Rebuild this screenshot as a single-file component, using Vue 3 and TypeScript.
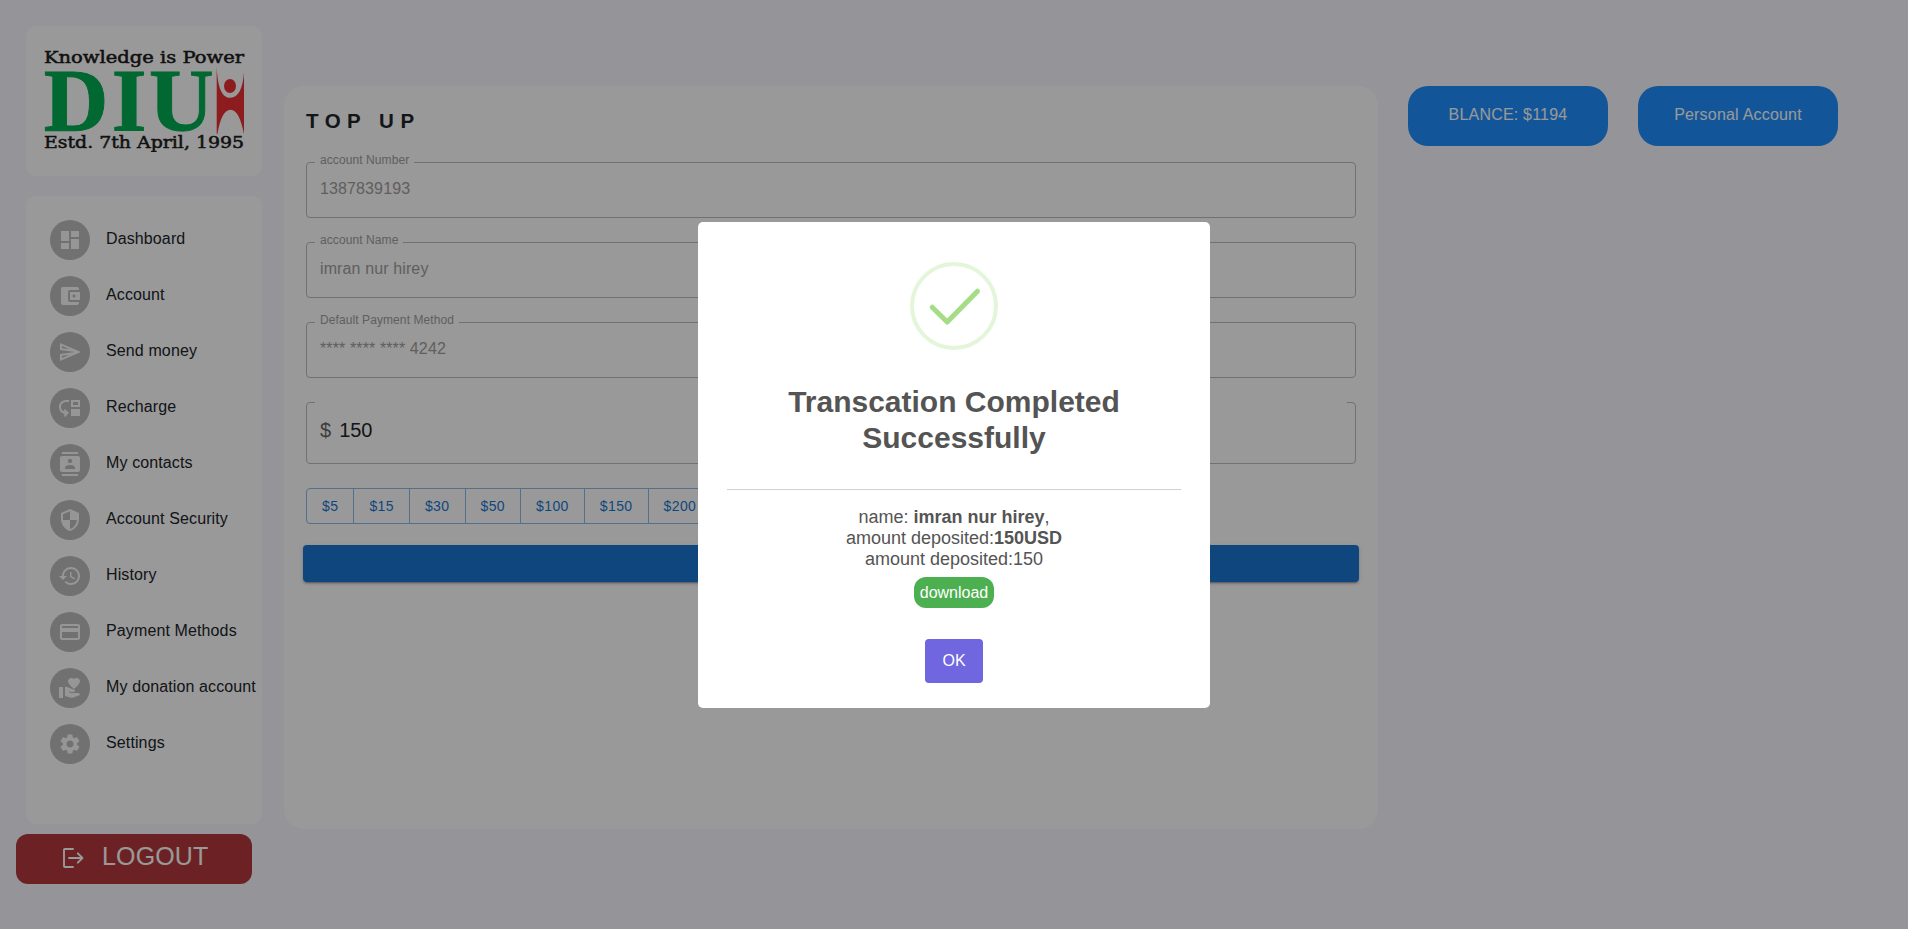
<script setup lang="ts">
interface NavItem {
  label: string
  icon: string
}

interface Field {
  label: string
  value: string
}

const navItems: NavItem[] = [
  { label: 'Dashboard', icon: 'M3 13h8V3H3v10zm0 8h8v-6H3v6zm10 0h8V11h-8v10zm0-18v6h8V3h-8z' },
  {
    label: 'Account',
    icon: 'M21 18v1c0 1.1-.9 2-2 2H5c-1.11 0-2-.9-2-2V5c0-1.1.89-2 2-2h14c1.1 0 2 .9 2 2v1h-9c-1.11 0-2 .9-2 2v8c0 1.1.89 2 2 2h9zm-9-2h10V8H12v8zm4-2.5c-.83 0-1.5-.67-1.5-1.5s.67-1.5 1.5-1.5 1.5.67 1.5 1.5-.67 1.5-1.5 1.5z',
  },
  {
    label: 'Send money',
    icon: 'M4.01 6.03l7.51 3.22-7.52-1 .01-2.22m7.5 8.72L4 17.97v-2.22l7.51-1M2.01 3L2 10l15 2-15 2 .01 7L23 12 2.01 3z',
  },
  {
    label: 'Recharge',
    icon: 'M3 11c0 2.45 1.76 4.47 4.08 4.91l-1.49-1.49L7 13l4 4.01L7 21l-1.41-1.41 1.58-1.58v-.06C3.7 17.54 1 14.58 1 11c0-3.87 3.13-7 7-7h3v2H8c-2.76 0-5 2.24-5 5zM22 11V4h-9v7h9zm-2-2h-5V6h5v3zM13 13h9v7h-9z',
  },
  {
    label: 'My contacts',
    icon: 'M20 0H4v2h16V0zM4 24h16v-2H4v2zM20 4H4c-1.1 0-2 .9-2 2v12c0 1.1.9 2 2 2h16c1.1 0 2-.9 2-2V6c0-1.1-.9-2-2-2zm-8 2.75c1.24 0 2.25 1.01 2.25 2.25s-1.01 2.25-2.25 2.25S9.75 10.24 9.75 9 10.76 6.75 12 6.75zM17 17H7v-1.5c0-1.67 3.33-2.5 5-2.5s5 .83 5 2.5V17z',
  },
  {
    label: 'Account Security',
    icon: 'M12 1L3 5v6c0 5.55 3.84 10.74 9 12 5.16-1.26 9-6.45 9-12V5l-9-4zm0 10.99h7c-.53 4.12-3.28 7.79-7 8.94V12H5V6.3l7-3.11v8.8z',
  },
  {
    label: 'History',
    icon: 'M13 3c-4.97 0-9 4.03-9 9H1l3.89 3.89.07.14L9 12H6c0-3.87 3.13-7 7-7s7 3.13 7 7-3.13 7-7 7c-1.93 0-3.68-.79-4.94-2.06l-1.42 1.42C8.27 19.99 10.51 21 13 21c4.97 0 9-4.03 9-9s-4.03-9-9-9zm-1 5v5l4.28 2.54.72-1.21-3.5-2.08V8H12z',
  },
  {
    label: 'Payment Methods',
    icon: 'M20 4H4c-1.11 0-1.99.89-1.99 2L2 18c0 1.11.89 2 2 2h16c1.11 0 2-.89 2-2V6c0-1.11-.89-2-2-2zm0 14H4v-6h16v6zm0-10H4V6h16v2z',
  },
  {
    label: 'My donation account',
    icon: 'M1 11h4v11H1zM16 3.25C16.65 2.49 17.66 2 18.7 2 20.55 2 22 3.45 22 5.3c0 2.27-2.91 4.9-6 7.7-3.09-2.81-6-5.44-6-7.7C10 3.45 11.45 2 13.3 2c1.04 0 2.05.49 2.7 1.25zM20 17h-7l-2.09-.73.33-.94L13 16h2.82c.65 0 1.18-.53 1.18-1.18 0-.49-.31-.93-.77-1.11L8.97 11H7v9.02L14 22l8.01-3c-.01-1.1-.9-2-2.01-2z',
  },
  {
    label: 'Settings',
    icon: 'M19.14 12.94c.04-.3.06-.61.06-.94 0-.32-.02-.64-.07-.94l2.03-1.58c.18-.14.23-.41.12-.61l-1.92-3.32c-.12-.22-.37-.29-.59-.22l-2.39.96c-.5-.38-1.03-.7-1.62-.94l-.36-2.54c-.04-.24-.24-.41-.48-.41h-3.84c-.24 0-.43.17-.47.41l-.36 2.54c-.59.24-1.13.57-1.62.94l-2.39-.96c-.22-.08-.47 0-.59.22L2.74 8.87c-.12.21-.08.47.12.61l2.03 1.58c-.05.3-.09.63-.09.94s.02.64.07.94l-2.03 1.58c-.18.14-.23.41-.12.61l1.92 3.32c.12.22.37.29.59.22l2.39-.96c.5.38 1.03.7 1.62.94l.36 2.54c.05.24.24.41.48.41h3.84c.24 0 .44-.17.47-.41l.36-2.54c.59-.24 1.13-.56 1.62-.94l2.39.96c.22.08.47 0 .59-.22l1.92-3.32c.12-.22.07-.47-.12-.61l-2.01-1.58zM12 15.6c-1.98 0-3.6-1.62-3.6-3.6s1.62-3.6 3.6-3.6 3.6 1.62 3.6 3.6-1.62 3.6-3.6 3.6z',
  },
]

const fields: Field[] = [
  { label: 'account Number', value: '1387839193' },
  { label: 'account Name', value: 'imran nur hirey' },
  { label: 'Default Payment Method', value: '**** **** **** 4242' },
]

const amounts: string[] = ['$5', '$15', '$30', '$50', '$100', '$150', '$200', '$500']
</script>

<template>
  <div class="page">
    <aside class="sidebar">
      <div class="logo-card">
        <svg class="logo" viewBox="0 0 204 104" width="204" height="104">
          <text class="tagline" x="2" y="15" textLength="200" lengthAdjust="spacingAndGlyphs">Knowledge is Power</text>
          <text class="initials" x="1.8 69.8 107" y="81.9">DIU</text>
          <path
            class="figure"
            d="M174.7 18.2C175.6 40 180 49.8 188.3 49.8C196.5 49.8 201 40 202 24V86C199 71 195 61.7 188.5 61.7C182 61.7 178 71 175.4 86H174.7Z"
          />
          <ellipse class="figure" cx="188" cy="38" rx="6" ry="7" />
          <text class="tagline" x="2" y="99.6" textLength="200" lengthAdjust="spacingAndGlyphs">Estd. 7th April, 1995</text>
        </svg>
      </div>
      <nav class="nav-card">
        <a v-for="item in navItems" :key="item.label" class="nav-item">
          <span class="avatar">
            <svg viewBox="0 0 24 24" width="24" height="24"><path :d="item.icon" /></svg>
          </span>
          <span class="nav-label">{{ item.label }}</span>
        </a>
      </nav>
      <button class="logout">
        <svg class="logout-icon" viewBox="0 0 24 24" width="24" height="24">
          <path d="M12 4H3.8Q3 4 3 4.800V21.200Q3 22 3.800 22H12M8 13H21.500M16.800 8.300L21.500 13L16.800 17.700" />
        </svg>
        <span>LOGOUT</span>
      </button>
    </aside>

    <main class="panel">
      <h1 class="heading">TOP UP</h1>
      <fieldset v-for="field in fields" :key="field.label" class="field">
        <legend><span>{{ field.label }}</span></legend>
        <div class="value">{{ field.value }}</div>
      </fieldset>
      <fieldset class="field amount">
        <legend class="wide"></legend>
        <div class="amount-value"><span class="currency">$</span><span>150</span></div>
      </fieldset>
      <div class="group">
        <button v-for="amount in amounts" :key="amount">{{ amount }}</button>
      </div>
      <button class="submit"></button>
    </main>

    <section class="pills">
      <div class="pill">BLANCE: $1194</div>
      <div class="pill">Personal Account</div>
    </section>

    <div class="overlay">
      <div class="modal">
        <svg class="success" viewBox="0 0 88 88" width="88" height="88">
          <circle cx="44" cy="44" r="42" />
          <path d="M22.200 45.200L37.200 60L67.500 29.200" />
        </svg>
        <h2>Transcation Completed Successfully</h2>
        <hr />
        <p>
          name: <b>imran nur hirey</b>,<br />
          amount deposited:<b>150USD</b><br />
          amount deposited:150
        </p>
        <button class="download">download</button>
        <button class="ok">OK</button>
      </div>
    </div>
  </div>
</template>

<style>
body {
  margin: 0;
  overflow: hidden;
}
</style>

<style scoped>
.page {
  box-sizing: border-box;
  display: flex;
  align-items: flex-start;
  height: 929px;
  background: #f8f7ff;
  color: #212529;
  font-family: Helvetica, "Liberation Sans", Arial, sans-serif;
  font-size: 16px;
}

button {
  border: 0;
  font-family: inherit;
}

.sidebar {
  display: flex;
  flex-direction: column;
  width: 236px;
  margin: 26px 22px 0 26px;
}

.logo-card {
  display: flex;
  justify-content: center;
  align-items: flex-start;
  box-sizing: border-box;
  height: 150px;
  padding-top: 22px;
  border-radius: 10px;
  background: #fff;
}

.tagline {
  font-family: "DejaVu Serif", serif;
  font-size: 16px;
  fill: #1c1c1c;
  stroke: #1c1c1c;
  stroke-width: 0.5px;
}

.initials {
  font-family: "Liberation Serif", serif;
  font-size: 89.5px;
  font-weight: bold;
  fill: #00ad50;
  stroke: #00ad50;
  stroke-width: 0.9px;
}

.figure {
  fill: #e93032;
}

.nav-card {
  display: flex;
  flex-direction: column;
  gap: 16px;
  box-sizing: border-box;
  height: 628px;
  margin-top: 20px;
  padding: 24px 0 0 24px;
  border-radius: 10px;
  background: #fff;
}

.nav-item {
  display: flex;
  gap: 16px;
  height: 40px;
}

.avatar {
  display: flex;
  flex: none;
  align-items: center;
  justify-content: center;
  width: 40px;
  height: 40px;
  border-radius: 50%;
  background: #bdbdbd;
}

.avatar svg {
  fill: #fafafa;
}

.nav-label {
  line-height: 38px;
  letter-spacing: 0.12px;
  white-space: nowrap;
}

.logout {
  display: flex;
  gap: 17px;
  box-sizing: border-box;
  width: 236px;
  height: 50px;
  margin: 10px 0 0 -10px;
  padding: 11px 0 0 45px;
  border-radius: 12px;
  background: #b4393c;
  color: #fff;
  font-size: 25px;
  line-height: 22px;
  letter-spacing: 0.15px;
}

.logout-icon {
  fill: none;
  stroke: #fff;
  stroke-width: 1.900;
  stroke-linecap: round;
  stroke-linejoin: round;
}

.panel {
  box-sizing: border-box;
  width: 1094px;
  height: 743px;
  margin-top: 86px;
  padding: 22px;
  border-radius: 20px;
  background: #fff;
}

.heading {
  height: 24px;
  margin: 0 0 24px;
  font-size: 20.5px;
  line-height: 26px;
  letter-spacing: 6.500px;
}

.field {
  position: relative;
  box-sizing: border-box;
  height: 62px;
  min-width: 0;
  margin: 0 0 18px;
  padding: 0 8px;
  border: 1px solid #bdbdbd;
  border-radius: 4px;
}

.field legend {
  height: 13px;
  padding: 0 5px;
  color: #9e9e9e;
  font-size: 12px;
  line-height: 9px;
  letter-spacing: 0.090px;
}

.value {
  margin: 10px 5px 0;
  color: #9e9e9e;
  line-height: 20px;
  letter-spacing: 0.12px;
}

.amount {
  height: 68px;
  margin-bottom: 24px;
}

.field .wide {
  box-sizing: border-box;
  width: 100%;
}

.amount-value {
  display: flex;
  gap: 8px;
  margin: 9px 5px 0;
  font-size: 20px;
  line-height: 24px;
}

.currency {
  color: #666;
}

.group {
  display: flex;
  width: max-content;
  border: 1px solid #8cbae8;
  border-radius: 4px;
}

.group button {
  height: 34px;
  padding: 0 15px;
  border-right: 1px solid #8cbae8;
  background: none;
  color: #1976d2;
  font-size: 14px;
  line-height: 32px;
  letter-spacing: 0.400px;
}

.group button:last-child {
  border-right: 0;
}

.submit {
  display: block;
  width: 1056px;
  height: 37px;
  margin: 21px 0 0 -3px;
  border-radius: 4px;
  background: #1c76d2;
  box-shadow: 0 3px 1px -2px rgba(0, 0, 0, 0.2), 0 2px 2px rgba(0, 0, 0, 0.14), 0 1px 5px rgba(0, 0, 0, 0.12);
}

.pills {
  display: flex;
  gap: 30px;
  margin: 86px 0 0 30px;
}

.pill {
  width: 200px;
  height: 60px;
  border-radius: 20px;
  background: #1e90ff;
  color: #fff;
  line-height: 58px;
  letter-spacing: 0.200px;
  text-align: center;
}

.overlay {
  position: fixed;
  inset: 0;
  display: flex;
  align-items: center;
  justify-content: center;
  background: rgba(0, 0, 0, 0.4);
  font-family: "Liberation Sans", Arial, sans-serif;
}

.modal {
  display: flex;
  flex-direction: column;
  align-items: center;
  box-sizing: border-box;
  width: 512px;
  height: 486px;
  padding-top: 40px;
  border-radius: 5px;
  background: #fff;
  color: #545454;
  text-align: center;
}

.success {
  fill: none;
}

.success circle {
  stroke: #e4f6da;
  stroke-width: 4;
}

.success path {
  stroke: #a5dc86;
  stroke-width: 5;
  stroke-linecap: round;
  stroke-linejoin: round;
}

h2 {
  width: 400px;
  margin: 34px 0 0;
  font-size: 30px;
  line-height: 36px;
}

hr {
  width: 454px;
  height: 1px;
  margin: 33px 0 0;
  border: 0;
  background: #d0d0d0;
}

p {
  margin: 17px 0 0;
  font-size: 18px;
  line-height: 21px;
}

.download {
  height: 31px;
  width: 80px;
  margin-top: 7px;
  padding: 1px 0 0;
  border-radius: 12px;
  background: #4caf50;
  color: #fff;
  font-size: 16px;
}

.ok {
  width: 58px;
  height: 44px;
  margin-top: 31px;
  padding: 0;
  border-radius: 4px;
  background: #7066e0;
  color: #fff;
  font-size: 16px;
}
</style>
